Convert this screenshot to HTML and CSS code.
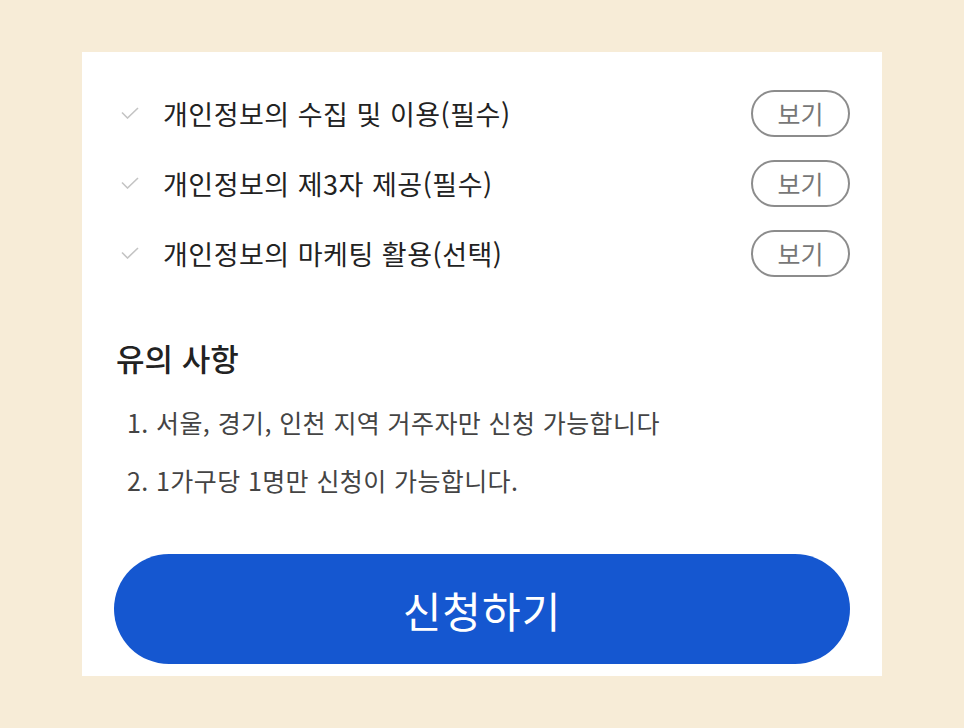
FILE: index.html
```html
<!DOCTYPE html>
<html lang="ko">
<head>
<meta charset="utf-8">
<link rel="stylesheet" href="styles.css">
</head>
<body>
<div class="card">
  <ul class="terms">
    <li class="term">
      <svg class="check" viewBox="0 0 18 12" width="18" height="12"><path d="M1 5.5 L6.5 11 L17 1" fill="none" stroke="#c4c4c4" stroke-width="1.6"/></svg>
      <span class="term-label">개인정보의 수집 및 이용(필수)</span>
      <button class="view">보기</button>
    </li>
    <li class="term">
      <svg class="check" viewBox="0 0 18 12" width="18" height="12"><path d="M1 5.5 L6.5 11 L17 1" fill="none" stroke="#c4c4c4" stroke-width="1.6"/></svg>
      <span class="term-label">개인정보의 제3자 제공(필수)</span>
      <button class="view">보기</button>
    </li>
    <li class="term">
      <svg class="check" viewBox="0 0 18 12" width="18" height="12"><path d="M1 5.5 L6.5 11 L17 1" fill="none" stroke="#c4c4c4" stroke-width="1.6"/></svg>
      <span class="term-label">개인정보의 마케팅 활용(선택)</span>
      <button class="view">보기</button>
    </li>
  </ul>
  <h2 class="notice-title">유의 사항</h2>
  <ol class="notice-list">
    <li>1. 서울, 경기, 인천 지역 거주자만 신청 가능합니다</li>
    <li>2. 1가구당 1명만 신청이 가능합니다.</li>
  </ol>
  <button class="apply">신청하기</button>
</div>
</body>
</html>
```

FILE: styles.css
```css
html, body {
  margin: 0;
  padding: 0;
}
body {
  background: #f7ecd7;
  font-family: "Noto Sans CJK KR", "Noto Sans", sans-serif;
  width: 964px;
  height: 728px;
  overflow: hidden;
}
.card {
  box-sizing: border-box;
  margin: 52px 0 0 82px;
  width: 800px;
  height: 624px;
  background: #ffffff;
  padding: 26px 32px 12px;
}
.terms {
  list-style: none;
  margin: 0;
  padding: 0;
}
.term {
  display: flex;
  align-items: center;
  height: 70px;
}
.check {
  margin-left: 7px;
  margin-right: 24px;
  flex: none;
}
.term-label {
  flex: 1;
  font-size: 27px;
  color: #222;
  letter-spacing: 0.5px;
}
.view {
  box-sizing: border-box;
  width: 99px;
  height: 47px;
  border: 2px solid #8c8c8c;
  border-radius: 24px;
  background: #fff;
  color: #777;
  font-family: inherit;
  font-size: 25px;
  padding: 0;
  line-height: 1;
}
.notice-title {
  margin: 50px 0 0 2px;
  font-size: 31px;
  line-height: 40px;
  font-weight: 500;
  color: #222;
}
.notice-list {
  list-style: none;
  margin: 15px 0 0 13px;
  padding: 0;
}
.notice-list li {
  font-size: 25px;
  line-height: 58px;
  color: #444;
  letter-spacing: 0.4px;
}
.apply {
  display: block;
  margin-top: 45px;
  width: 736px;
  height: 110px;
  border: none;
  border-radius: 55px;
  background: #1557d0;
  color: #fff;
  font-family: inherit;
  font-size: 42px;
  letter-spacing: 1px;
  padding: 0;
}
```
